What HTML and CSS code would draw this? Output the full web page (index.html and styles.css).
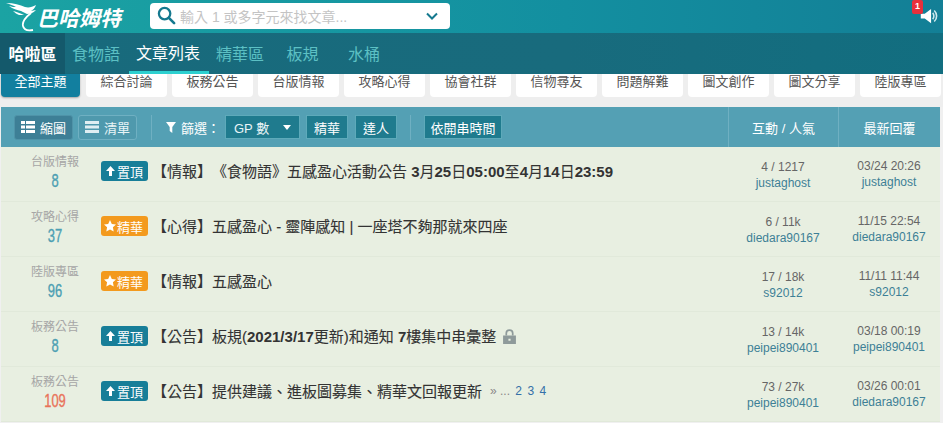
FILE: index.html
```html
<!DOCTYPE html>
<html lang="zh-Hant">
<head>
    <meta charset="UTF-8">
    <title>巴哈姆特</title>
    <link rel="stylesheet" href="styles.css">
</head>
<body>
    <header class="topbar">
        <a class="logo">
            <svg class="logo-mark" viewBox="0 0 34 30" width="34" height="30">
                <path d="M1 1 C9 1 15 3 20 5 C24 6 27 5 31 3 C30 6 28 8 26 9 L31 8 C28 11 25 12 22 12 L16 9 C12 8 8 7 4 4 C7 5 9 5 11 5 C8 3 4 2 1 1 Z" fill="#fff"/>
                <path d="M8 9 C12 10 15 11 19 13 L14 13 C12 12 10 11 8 9 Z" fill="#fff"/>
                <path d="M26 11 C21 15 17 20 18 24 C19 28 23 29 28 28" fill="none" stroke="#fff" stroke-width="1.800"/>
            </svg>
            <span class="logo-text">巴哈姆特</span>
        </a>
        <div class="search">
            <svg viewBox="0 0 20 20" width="19" height="19"><circle cx="8" cy="8" r="6" fill="none" stroke="#15798f" stroke-width="2.4"/><path d="M12.5 12.5 L18 18" stroke="#15798f" stroke-width="2.8" stroke-linecap="round"/></svg>
            <span class="search-text">輸入 1 或多字元來找文章...</span>
            <svg class="search-arrow" viewBox="0 0 12 8" width="12" height="8"><path d="M1 1.5 L6 6.5 L11 1.5" fill="none" stroke="#15798f" stroke-width="2"/></svg>
        </div>
        <div class="notice">
            <svg viewBox="0 0 24 20" width="19" height="16"><path d="M1 7 H6 L14 1 V19 L6 13 H1 Z" fill="#fff"/><path d="M16 6 C18 8 18 12 16 14 M18 3 C22 7 22 13 18 17" fill="none" stroke="#cfe9ee" stroke-width="2"/></svg>
            <span class="badge">1</span>
        </div>
    </header>

    <nav class="mainnav">
        <a class="nav-item nav-home">哈啦區</a>
        <a class="nav-item nav-game">食物語</a>
        <a class="nav-item nav-active">文章列表</a>
        <a class="nav-item nav-best">精華區</a>
        <a class="nav-item nav-rule">板規</a>
        <a class="nav-item nav-bucket">水桶</a>
    </nav>

    <div class="tabs">
        <a class="tab tab-active">全部主題</a>
        <a class="tab">綜合討論</a>
        <a class="tab">板務公告</a>
        <a class="tab">台版情報</a>
        <a class="tab">攻略心得</a>
        <a class="tab">協會社群</a>
        <a class="tab">信物尋友</a>
        <a class="tab">問題解難</a>
        <a class="tab">圖文創作</a>
        <a class="tab">圖文分享</a>
        <a class="tab">陸版專區</a>
    </div>

    <section class="list">
        <div class="list-head">
            <div class="tools">
                <a class="tool tool-on">
                    <svg viewBox="0 0 14 12" width="14" height="12"><path d="M0 0h4v3H0zM5 0h9v3H5zM0 4.500h4v3H0zM5 4.500h9v3H5zM0 9h4v3H0zM5 9h9v3H5z" fill="#fff"/></svg>縮圖
                </a>
                <a class="tool">
                    <svg viewBox="0 0 14 12" width="14" height="12"><path d="M0 0h14v3H0zM0 4.500h14v3H0zM0 9h14v3H0z" fill="#dfeef2"/></svg>清單
                </a>
                <span class="sep"></span>
                <svg class="funnel" viewBox="0 0 10 11" width="10" height="11"><path d="M0 0 H10 L6.300 5 V11 L3.700 9 V5 Z" fill="#fff"/></svg>
                <span class="filter-label">篩選：</span>
                <a class="fbtn fbtn-select">GP 數<i class="caret"></i></a>
                <a class="fbtn">精華</a>
                <a class="fbtn">達人</a>
                <span class="sep sep-2"></span>
                <a class="fbtn fbtn-time">依開串時間</a>
            </div>
            <div class="head-stat">互動 / 人氣</div>
            <div class="head-reply">最新回覆</div>
        </div>

        <div class="row">
            <div class="forum">台版情報<b class="count">8</b></div>
            <div class="title-cell"><span class="tag tag-top"><svg viewBox="0 0 9 10" width="9" height="10"><path d="M4.500 0 L9 5 H6 V10 H3 V5 H0 Z" fill="#fff"/></svg>置頂</span><span class="title">【情報】《食物語》五感盈心活動公告 <b>3</b>月<b>25</b>日<b>05:00</b>至<b>4</b>月<b>14</b>日<b>23:59</b></span></div>
            <div class="stat">4 / 1217<a>justaghost</a></div>
            <div class="reply">03/24 20:26<a>justaghost</a></div>
        </div>
        <div class="row">
            <div class="forum">攻略心得<b class="count">37</b></div>
            <div class="title-cell"><span class="tag tag-best"><svg viewBox="0 0 12 12" width="12" height="12"><path d="M6 0 L7.800 4 L12 4.500 L8.900 7.300 L9.700 11.500 L6 9.400 L2.300 11.500 L3.100 7.300 L0 4.500 L4.200 4 Z" fill="#fff"/></svg>精華</span><span class="title">【心得】五感盈心 - 靈陣感知 | 一座塔不夠那就來四座</span></div>
            <div class="stat">6 / 11k<a>diedara90167</a></div>
            <div class="reply">11/15 22:54<a>diedara90167</a></div>
        </div>
        <div class="row">
            <div class="forum">陸版專區<b class="count">96</b></div>
            <div class="title-cell"><span class="tag tag-best"><svg viewBox="0 0 12 12" width="12" height="12"><path d="M6 0 L7.800 4 L12 4.500 L8.900 7.300 L9.700 11.500 L6 9.400 L2.300 11.500 L3.100 7.300 L0 4.500 L4.200 4 Z" fill="#fff"/></svg>精華</span><span class="title">【情報】五感盈心</span></div>
            <div class="stat">17 / 18k<a>s92012</a></div>
            <div class="reply">11/11 11:44<a>s92012</a></div>
        </div>
        <div class="row">
            <div class="forum">板務公告<b class="count">8</b></div>
            <div class="title-cell"><span class="tag tag-top"><svg viewBox="0 0 9 10" width="9" height="10"><path d="M4.500 0 L9 5 H6 V10 H3 V5 H0 Z" fill="#fff"/></svg>置頂</span><span class="title">【公告】板規(<b>2021/3/17</b>更新)和通知 <b>7</b>樓集中串彙整</span>
                <svg class="lock" viewBox="0 0 12 14" width="13" height="15"><path d="M3 6 V4 A3 3 0 0 1 9 4 V6" fill="none" stroke="#8e9a9a" stroke-width="1.600"/><path d="M0 6 H12 V14 H0 Z M5 9 V11 H7 V9 Z" fill="#8e9a9a" fill-rule="evenodd"/></svg>
            </div>
            <div class="stat">13 / 14k<a>peipei890401</a></div>
            <div class="reply">03/18 00:19<a>peipei890401</a></div>
        </div>
        <div class="row">
            <div class="forum">板務公告<b class="count count-hot">109</b></div>
            <div class="title-cell"><span class="tag tag-top"><svg viewBox="0 0 9 10" width="9" height="10"><path d="M4.500 0 L9 5 H6 V10 H3 V5 H0 Z" fill="#fff"/></svg>置頂</span><span class="title">【公告】提供建議、進板圖募集、精華文回報更新</span>
                <span class="pages">» ... <a>2</a> <a>3</a> <a>4</a></span>
            </div>
            <div class="stat">73 / 27k<a>peipei890401</a></div>
            <div class="reply">03/26 00:01<a>diedara90167</a></div>
        </div>
    </section>
</body>
</html>
```

FILE: styles.css
```css
* {
    box-sizing: border-box;
}

html, body {
    height: 423px;
    overflow: hidden;
}

body {
    margin: 0;
    font-family: "Liberation Sans", "Noto Sans CJK TC", sans-serif;
    font-size: 13px;
    color: #444;
    background-color: #f0f0f0;
    text-spacing-trim: space-all;
}

/* top bar */
.topbar {
    height: 33px;
    display: flex;
    align-items: center;
    background: linear-gradient(90deg, #1ba3a3 0%, #138fa0 60%, #137f96 100%);
}

.logo {
    width: 150px;
    display: flex;
    align-items: center;
    padding-left: 5px;
}

.logo-text {
    margin-left: -2px;
    font-size: 21px;
    font-weight: 700;
    font-style: italic;
    color: #fff;
    white-space: nowrap;
}

.search {
    width: 300px;
    height: 26px;
    margin-top: -2px;
    display: flex;
    align-items: center;
    padding: 0 12px 0 7px;
    background-color: #fff;
    border-radius: 4px;
}

.search-text {
    margin-left: 4px;
    font-size: 14px;
    color: #c4c4c4;
    white-space: nowrap;
}

.search-arrow {
    margin-left: auto;
}

.notice {
    position: relative;
    margin-left: auto;
    margin-right: 4px;
    margin-top: -1px;
    height: 16px;
}

.badge {
    position: absolute;
    left: -8px;
    top: -8px;
    width: 11px;
    height: 14px;
    background-color: #e8303c;
    border-radius: 2px;
    color: #fff;
    font-size: 9px;
    font-weight: 700;
    line-height: 12px;
    text-align: center;
}

/* main nav */
.mainnav {
    height: 41px;
    display: flex;
    background: linear-gradient(90deg, #186a7c 0%, #186b7d 60%, #126e80 100%);
    font-size: 16px;
}

.nav-item {
    display: flex;
    align-items: center;
    justify-content: center;
    padding-bottom: 1px;
    color: #5cc0c4;
    white-space: nowrap;
}

.nav-home {
    width: 65px;
    background-color: #14596b;
    color: #fff;
    font-weight: 700;
}

.nav-game {
    width: 64px;
    padding-right: 2px;
}

.nav-active {
    width: 80px;
    padding-right: 2px;
    padding-bottom: 0;
    color: #fff;
    border-bottom: 3px solid #2dd0d0;
}

.nav-best {
    width: 64px;
    padding-right: 2px;
}

.nav-rule {
    width: 63px;
    padding-right: 4px;
}

.nav-bucket {
    width: 62px;
    padding-right: 6px;
}

/* forum tabs */
.tabs {
    height: 33px;
    display: flex;
    gap: 5px;
    align-items: flex-start;
    padding-left: 1px;
    background-color: #eee;
    background-image: radial-gradient(#d8d8d8 0.5px, transparent 0.6px);
    background-size: 2px 2px;
}

.tab {
    width: 81px;
    height: 23px;
    background-color: #fff;
    border-radius: 0 0 4px 4px;
    color: #555;
    font-size: 13px;
    line-height: 15px;
    text-align: center;
}

.tab-active {
    background-color: #127f9f;
    color: #fff;
    width: 79px;
    margin-right: 1px;
    box-shadow: 0 1px 2px rgba(0, 0, 0, 0.3);
}

/* list */
.list {
    width: 939px;
    margin-left: 1px;
    background-color: #e8efe1;
}

.list-head {
    height: 40px;
    display: flex;
    background-color: #54a0b4;
    color: #fff;
}

.tools {
    width: 727px;
    display: flex;
    align-items: center;
    padding: 0 0 0 13px;
}

.tool {
    height: 25px;
    width: 59px;
    margin-right: 5px;
    display: flex;
    align-items: center;
    justify-content: center;
    gap: 5px;
    border: 1px solid #6fb0c2;
    border-radius: 3px;
    font-size: 13px;
    color: #e8f4f6;
    background-color: #4f99ad;
}

.tool-on {
    background-color: #3d7f96;
    border-color: #4f93a8;
    color: #fff;
}

.sep {
    width: 1px;
    height: 25px;
    margin: 0 14px 0 9px;
    background-color: #6fb0c2;
}

.sep-2 {
    margin: 0 13px 0 6px;
}

.funnel {
    margin-right: 5px;
}

.filter-label {
    width: 44px;
    font-size: 13px;
    color: #fff;
    white-space: nowrap;
}

.fbtn {
    width: 42px;
    height: 24px;
    margin-right: 7px;
    display: flex;
    align-items: center;
    justify-content: center;
    background-color: #1f7b8e;
    border: 1px solid #5eaaba;
    font-size: 13px;
    color: #fff;
    white-space: nowrap;
}

.fbtn-select {
    width: 75px;
    margin-right: 6px;
    padding: 0 8px;
    justify-content: space-between;
    color: #e8f4f6;
}

.fbtn-time {
    width: 78px;
}

.caret {
    width: 0;
    height: 0;
    border-left: 4px solid transparent;
    border-right: 4px solid transparent;
    border-top: 5px solid #fff;
}

.head-stat,
.head-reply {
    display: flex;
    align-items: center;
    justify-content: center;
    border-left: 1px solid #6fb0c2;
    font-size: 13px;
}

.head-stat {
    width: 110px;
}

.head-reply {
    width: 102px;
}

.row {
    height: 55px;
    display: flex;
    border-bottom: 1px solid #e1e9da;
}

.forum {
    width: 96px;
    padding: 7px 18px 0 0;
    display: flex;
    flex-direction: column;
    align-items: flex-end;
    color: #a6a6a6;
    font-size: 12px;
    line-height: 16px;
}

.count {
    width: 48px;
    display: block;
    color: #4d9fb3;
    font-size: 19px;
    font-weight: 400;
    line-height: 22px;
    text-align: center;
    transform: scaleX(0.68);
    -webkit-text-stroke: 0.4px currentColor;
}

.count-hot {
    color: #e8735a;
}

.title-cell {
    width: 631px;
    display: flex;
    align-items: center;
    padding: 0 0 6px 4px;
    white-space: nowrap;
}

.tag {
    width: 47px;
    height: 20px;
    margin-right: 4px;
    padding: 0 5px;
    display: flex;
    align-items: center;
    justify-content: space-between;
    border-radius: 3px;
    color: #fff;
    font-size: 13px;
}

.tag-top {
    background-color: #177e98;
}

.tag-best {
    background-color: #f39a1e;
    padding-left: 3px;
}

.title {
    margin-top: -2px;
    font-size: 15px;
    color: #333;
    -webkit-text-stroke: 0.1px #333;
}

.title b {
    font-weight: 700;
    -webkit-text-stroke: 0;
}

.lock {
    margin-left: 7px;
}

.pages {
    margin-left: 8px;
    font-size: 12px;
    color: #888;
}

.pages a {
    color: #3470a8;
    margin-left: 2px;
}

.stat,
.reply {
    display: flex;
    flex-direction: column;
    align-items: center;
    font-size: 12px;
    line-height: 16px;
    color: #666;
}

.stat {
    width: 110px;
    padding-top: 12px;
}

.reply {
    width: 102px;
    padding-top: 11px;
}

.stat a,
.reply a {
    color: #3d7f96;
}
```
